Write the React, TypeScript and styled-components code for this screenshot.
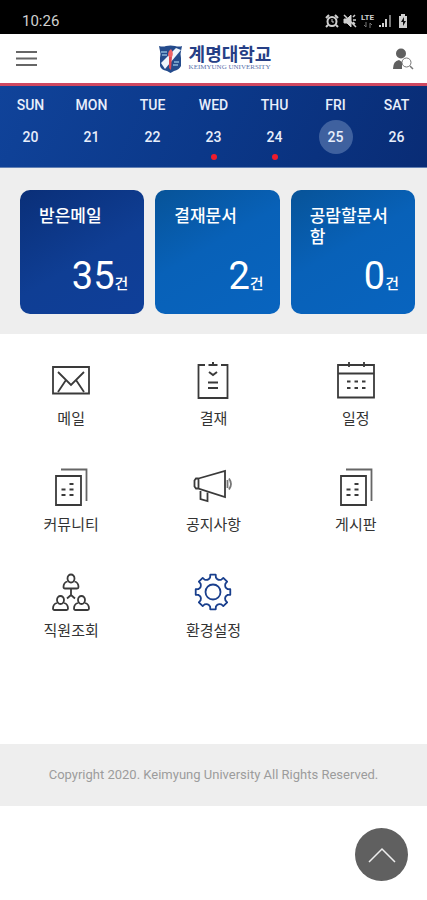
import React from "react";
import styled, { createGlobalStyle } from "styled-components";

const GlobalStyle = createGlobalStyle`
  * { box-sizing: border-box; }
  body {
    margin: 0;
    background: #fff;
    color: #333;
    font-family: Roboto, "Noto Sans CJK KR", sans-serif;
  }
  button { border: 0; padding: 0; background: none; font: inherit; cursor: pointer; }
  a { color: inherit; text-decoration: none; }
  svg { display: block; }
`;

const StatusBar = styled.div`
  display: flex;
  align-items: center;
  justify-content: space-between;
  height: 34px;
  padding: 7px 17px 0 22px;
  background: #000;
  color: #d0d0d0;
  font-size: 15px;
`;

const StatusIcons = styled.div`
  display: flex;
  align-items: center;
  gap: 4px;
`;

const Header = styled.header`
  display: flex;
  align-items: center;
  justify-content: space-between;
  height: 52px;
  padding: 0 13px 0 16px;
  border-bottom: 3px solid #cf4860;
  background: #fff;
`;

const IconButton = styled.button`
  display: flex;
  align-items: center;
  justify-content: center;
`;

const Brand = styled.a`
  display: flex;
  align-items: center;
  gap: 6px;
`;

const BrandText = styled.span`
  display: flex;
  flex-direction: column;
  padding-bottom: 3px;
  color: #263f86;
`;

const BrandName = styled.span`
  font-family: "Noto Sans CJK KR", sans-serif;
  font-size: 18px;
  font-weight: 700;
  line-height: 20px;
`;

const BrandSub = styled.span`
  font-family: "Liberation Serif", serif;
  font-size: 7px;
  line-height: 8px;
  color: #5870ab;
`;

const Week = styled.section`
  display: grid;
  grid-template-columns: repeat(7, 1fr);
  height: 82px;
  padding-top: 9px;
  background: linear-gradient(115deg, #10439a, #0b3889 50%, #092c75);
  border-bottom: 1px solid #6381b4;
`;

const Day = styled.div`
  display: flex;
  flex-direction: column;
  align-items: center;
  color: #e8eefb;
  font-size: 14px;
  font-weight: 500;
  line-height: 20px;
`;

const DayNumber = styled.button<{ $today?: boolean }>`
  width: 34px;
  height: 34px;
  margin-top: 5px;
  border-radius: 50%;
  background: ${(p) => (p.$today ? "#3f619f" : "transparent")};
  color: #e8eefb;
  text-align: center;
`;

const Dot = styled.span`
  width: 6px;
  height: 6px;
  border-radius: 50%;
  background: #f01c2c;
`;

const Summary = styled.section`
  display: grid;
  grid-template-columns: repeat(3, 1fr);
  gap: 11px;
  padding: 22px 12px 20px 20px;
  background: #eee;
`;

const Card = styled.a<{ $dark?: boolean }>`
  display: flex;
  flex-direction: column;
  justify-content: space-between;
  min-height: 124px;
  padding: 16px 16px 12px 19px;
  border-radius: 10px;
  background: ${(p) =>
    p.$dark
      ? "linear-gradient(150deg, #0a2f78, #0f3e94 55%, #0f3f99)"
      : "linear-gradient(150deg, #075398, #0861b8 45%, #0864bf)"};
  color: #fff;
`;

const CardTitle = styled.span`
  font-size: 17px;
  font-weight: 500;
  line-height: 21px;
  word-break: break-all;
`;

const CardCount = styled.span`
  align-self: flex-end;
  font-size: 38px;
  line-height: 36px;
`;

const Unit = styled.span`
  font-size: 15px;
  font-weight: 500;
`;

const Menu = styled.nav`
  display: grid;
  grid-template-columns: repeat(3, 1fr);
  grid-auto-rows: 106px;
  padding: 26px 0 66px;
`;

const MenuItem = styled.a`
  display: flex;
  flex-direction: column;
  align-items: center;
  gap: 9px;
  font-size: 15px;
  line-height: 20px;
`;

const Footer = styled.footer`
  padding: 21px 16px;
  background: #eee;
  color: #9c9c9c;
  font-size: 13px;
  line-height: 20px;
  text-align: center;
`;

const TopButton = styled.button`
  position: fixed;
  right: 19px;
  bottom: 19px;
  display: flex;
  align-items: center;
  justify-content: center;
  width: 53px;
  height: 53px;
  border-radius: 50%;
  background: #606060;
`;

const gearPath = (() => {
  const at = (degrees: number, radius: number) => {
    const angle = (degrees * Math.PI) / 180;
    return `${20 + radius * Math.cos(angle)} ${20 + radius * Math.sin(angle)}`;
  };
  let path = `M${at(-99, 17.5)}`;
  for (let tooth = 0; tooth < 8; tooth++) {
    const center = tooth * 45 - 90;
    path += `L${at(center + 9, 17.5)}L${at(center + 11, 15)}`;
    path += `A4.5 4.5 0 0 0 ${at(center + 34, 15)}L${at(center + 36, 17.5)}`;
  }
  return `${path}Z`;
})();

const Person = ({ x, y }: { x: number; y: number }) => (
  <g transform={`translate(${x} ${y})`}>
    <ellipse cx="0" cy="-4" rx="3.500" ry="4" />
    <path d="M-3.500 -1Q-7.500 0-7.500 4.500-7.500 6-6 6H6Q7.500 6 7.500 4.500 7.500 0 3.500-1" />
  </g>
);

const PageStack = () => (
  <>
    <path d="M5 10h25v29H5z" />
    <path d="M10 3.500h25.500V35" stroke="#666" />
    <path d="M10.500 23.500h4M18.500 23.500h4M10.500 29h4M18.500 29h4M18.500 18h4" strokeWidth="2" />
  </>
);

const drawings: Record<string, React.ReactNode> = {
  mail: (
    <>
      <path d="M2 7h36v26.500H2z" />
      <path d="M7 12l13 13 13-13M15 20L7 32M25 20l8 12" />
    </>
  ),
  approval: (
    <>
      <path d="M12 5H5.500v33h29V5H28M15.500 5h9" />
      <path d="M20 2v3M16 12l4 3 4-3M15 22.500h10M15 28h10" strokeWidth="2" />
    </>
  ),
  calendar: (
    <>
      <path d="M2 5h36v32.500H2zM2 13.500h36M13 2v5M28 2v5" />
      <path d="M11 21.500h3.500M18.500 21.500h3.500M26 21.500h3.500M11 28h3.500M18.500 28h3.500M26 28h3.500" strokeWidth="2" />
    </>
  ),
  pages: <PageStack />,
  megaphone: (
    <>
      <path d="M5.500 12.500L32 5v26L5.500 22.500zM5.500 12.500H3l-1.500 2v6L3 22.500h2.500" />
      <path d="M7.500 25v8l7 2v-8.500" />
      <path d="M34.500 14v8M36 12.500q4 5.500 0 11" stroke="#777" />
    </>
  ),
  people: (
    <>
      <Person x={20} y={10.5} />
      <Person x={9.5} y={32} />
      <Person x={30.5} y={32} />
      <path d="M20 17v6M16 26.500l4-3.500 4 3.500" />
    </>
  ),
  gear: (
    <>
      <path d={gearPath} strokeLinejoin="round" />
      <circle cx="20" cy="20" r="7.500" />
    </>
  ),
};

const MenuIcon = ({ name }: { name: string }) => (
  <svg
    width="40"
    height="40"
    viewBox="0 0 40 40"
    fill="none"
    stroke={name === "gear" ? "#193f8d" : "#3a3a3a"}
    strokeWidth="1.800"
    aria-hidden="true"
  >
    {drawings[name]}
  </svg>
);

const Crest = () => (
  <svg width="25" height="28" viewBox="0 0 25 28" aria-hidden="true">
    <path d="M1 1q4 1 7 0 4.500-1 9 0 4 1 7 0l-1 5q-1 3 0 7v8q-2 4-7 5l-3.500 2L9 26q-6-1-7-5v-8q1-4 0-7z" fill="#244b8c" />
    <path d="M3 18L18 3l5 2L7 24z" fill="#eff5fc" />
    <path d="M3 7h6M4 10h5M16 17h5M15 20h5" stroke="#89b5d8" strokeWidth="1.500" />
    <path d="M11 12l3-1-1 14-2-2z" fill="#d94752" />
    <path d="M10 10q0-4 3-6 3 4 1 8h-3z" fill="#ef6165" />
  </svg>
);

const days = [
  { name: "SUN", date: 20 },
  { name: "MON", date: 21 },
  { name: "TUE", date: 22 },
  { name: "WED", date: 23, marked: true },
  { name: "THU", date: 24, marked: true },
  { name: "FRI", date: 25, today: true },
  { name: "SAT", date: 26 },
];

const cards = [
  { title: "받은메일", count: 35, dark: true },
  { title: "결재문서", count: 2 },
  { title: "공람할문서함", count: 0 },
];

const menu = [
  { label: "메일", icon: "mail" },
  { label: "결재", icon: "approval" },
  { label: "일정", icon: "calendar" },
  { label: "커뮤니티", icon: "pages" },
  { label: "공지사항", icon: "megaphone" },
  { label: "게시판", icon: "pages" },
  { label: "직원조회", icon: "people" },
  { label: "환경설정", icon: "gear" },
];

const LteText = styled.span`
  display: flex;
  flex-direction: column;
  align-items: center;
  font-size: 8px;
  font-weight: 700;
  line-height: 8px;
`;

export default function App() {
  return (
    <>
      <GlobalStyle />
      <StatusBar>
        <span>10:26</span>
        <StatusIcons>
          <svg width="14" height="14" viewBox="0 0 14 14" fill="none" stroke="#d0d0d0" aria-hidden="true">
            <circle cx="7" cy="7.500" r="4.500" strokeWidth="2" />
            <path d="M1 4l3-3M10 1l3 3M3 11l-2 2M11 11l2 2" strokeWidth="2" />
            <path d="M7 5v3h2" />
          </svg>
          <svg width="14" height="14" viewBox="0 0 14 14" fill="#d0d0d0" stroke="#d0d0d0" aria-hidden="true">
            <path d="M1 5h3l4-4v12L4 9H1z" />
            <path d="M1 1l12 12M10 3l2-2M10 6h3M10 8l2 2" fill="none" strokeWidth="1.500" />
          </svg>
          <LteText>
            LTE
            <svg width="10" height="6" viewBox="0 0 10 6" fill="none" stroke="#777" aria-hidden="true">
              <path d="M3 0v5M1 3l2 2M7 6V1l2 2" />
            </svg>
          </LteText>
          <svg width="14" height="14" viewBox="0 0 14 14" strokeWidth="2" aria-hidden="true">
            <path d="M2 11v2M5 9v4M8 5v8" stroke="#d0d0d0" />
            <path d="M12 1v12" stroke="#777" />
          </svg>
          <svg width="14" height="14" viewBox="0 0 14 14" aria-hidden="true">
            <path d="M3 2h2V0h4v2h2v12H3z" fill="#d0d0d0" />
            <path d="M8 3L5 8h2v4l3-5H8z" fill="#111" />
          </svg>
        </StatusIcons>
      </StatusBar>
      <Header>
        <IconButton aria-label="메뉴">
          <svg width="21" height="17" viewBox="0 0 21 17" stroke="#666" strokeWidth="2" aria-hidden="true">
            <path d="M0 2h21M0 8.500h21M0 15h21" />
          </svg>
        </IconButton>
        <Brand href="#">
          <Crest />
          <BrandText>
            <BrandName>계명대학교</BrandName>
            <BrandSub>KEIMYUNG UNIVERSITY</BrandSub>
          </BrandText>
        </Brand>
        <IconButton aria-label="직원 검색">
          <svg width="22" height="22" viewBox="0 0 22 22" aria-hidden="true">
            <circle cx="9" cy="5.500" r="5" fill="#606060" />
            <path d="M1 21q0-8 6-9l3 2v7z" fill="#606060" />
            <circle cx="14.500" cy="14.500" r="4.500" fill="#fff" stroke="#777" />
            <path d="M18 18l3 3" stroke="#777" strokeWidth="1.500" />
          </svg>
        </IconButton>
      </Header>
      <main>
        <Week>
          {days.map((day) => (
            <Day key={day.name}>
              <span>{day.name}</span>
              <DayNumber $today={day.today}>{day.date}</DayNumber>
              {day.marked && <Dot />}
            </Day>
          ))}
        </Week>
        <Summary>
          {cards.map((card) => (
            <Card key={card.title} href="#" $dark={card.dark}>
              <CardTitle>{card.title}</CardTitle>
              <CardCount>
                {card.count}
                <Unit>건</Unit>
              </CardCount>
            </Card>
          ))}
        </Summary>
        <Menu>
          {menu.map((item) => (
            <MenuItem key={item.label} href="#">
              <MenuIcon name={item.icon} />
              {item.label}
            </MenuItem>
          ))}
        </Menu>
      </main>
      <Footer>Copyright 2020. Keimyung University All Rights Reserved.</Footer>
      <TopButton aria-label="맨 위로">
        <svg width="28" height="16" viewBox="0 0 28 16" fill="none" stroke="#eee" strokeWidth="1.500" aria-hidden="true">
          <path d="M1 15L14 2l13 13" />
        </svg>
      </TopButton>
    </>
  );
}
